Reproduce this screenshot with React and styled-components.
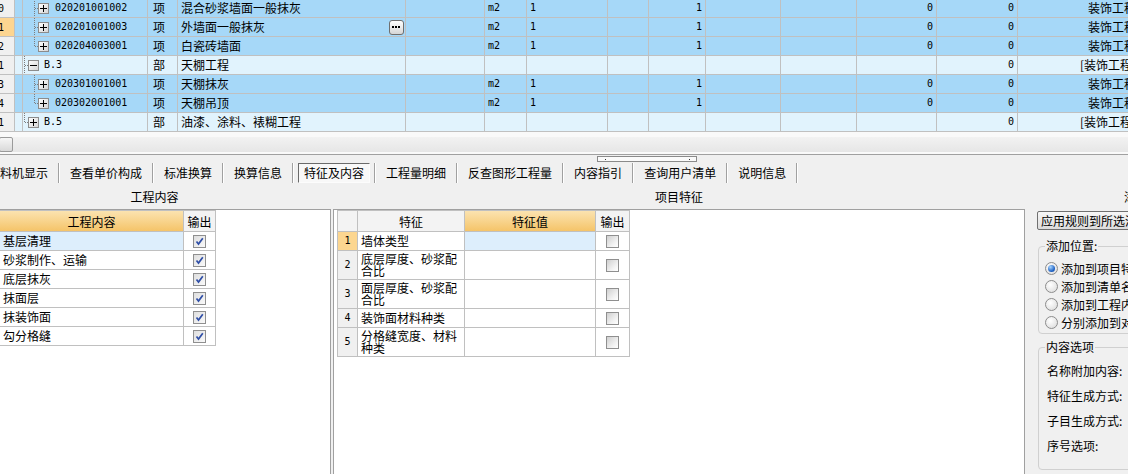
import React from "react";
import styled, { createGlobalStyle } from "styled-components";

const FONT = `"Noto Sans CJK SC", "Noto Sans", sans-serif`;
const MONO = `"DejaVu Sans Mono", "Liberation Mono", monospace`;

const GlobalStyle = createGlobalStyle`
  *, *::before, *::after { box-sizing: border-box; }
  html, body { margin: 0; padding: 0; }
  body { background: #f0f0f0; font-family: ${FONT}; font-size: 12px; color: #000; overflow: hidden; }
`;

const Page = styled.div`
  width: 1128px;
  height: 474px;
  overflow: hidden;
  display: flex;
  flex-direction: column;
  background: #f0f0f0;
`;

/* ---------- top grid ---------- */
const GRID_COLS = [15, 8, 125, 30, 228, 79, 42, 81, 41, 57, 75, 76, 80, 81, 122];

const Grid = styled.div`
  margin-top: -1px;
  flex: none;
  width: 1140px;
`;

const GridRow = styled.div`
  display: grid;
  grid-template-columns: ${GRID_COLS.map((w) => w + "px").join(" ")};
  height: 19px;
`;

const Cell = styled.div`
  display: flex;
  align-items: center;
  justify-content: ${(p) => (p.$right ? "flex-end" : "flex-start")};
  padding: 0 ${(p) => p.$pr ?? 3}px 0 ${(p) => p.$pl ?? 3}px;
  background: ${(p) => (p.$part ? "#e1f3fd" : "#a6d8f8")};
  border-right: 1px solid #c0c0c0;
  border-bottom: 1px solid #c0c0c0;
  white-space: nowrap;
  overflow: hidden;
  font-family: ${(p) => (p.$mono ? MONO : FONT)};
  font-size: ${(p) => (p.$mono ? "10px" : "12px")};
  line-height: 18px;
`;

const NoCell = styled.div`
  display: flex;
  align-items: center;
  justify-content: flex-end;
  padding-right: 10px;
  background: ${(p) => (p.$sel ? "#fdd590" : "#f0f0f0")};
  border-right: 1px solid #c0c0c0;
  border-bottom: 1px solid #c0c0c0;
  overflow: hidden;
  white-space: nowrap;
  font-family: ${MONO};
  font-size: 10px;
`;

const Code = styled.span`
  font-family: ${MONO};
  font-size: 10px;
`;

const EllipsisBtn = styled.span`
  margin-left: auto;
  flex: none;
  width: 15px;
  height: 15px;
  border: 1px solid #6f6f6f;
  border-radius: 3px;
  background: linear-gradient(#ffffff, #d6d6d6);
  display: flex;
  align-items: center;
  justify-content: center;
`;

const TreeGlyph = ({ level, last, open }) => {
  const w = level === 1 ? 21 : 32;
  const vx = level === 1 ? 1.5 : 11.5;
  const bx = level === 1 ? 5 : 15;
  return (
    <svg width={w} height={18} style={{ flex: "none", display: "block" }} shapeRendering="crispEdges">
      <defs>
        <linearGradient id="tg" x1="0" y1="0" x2="1" y2="1">
          <stop offset="0" stopColor="#ffffff" />
          <stop offset="1" stopColor="#d4d4d4" />
        </linearGradient>
      </defs>
      <line x1={vx} y1={0} x2={vx} y2={last ? 10 : 18} stroke="#7c7c7c" strokeDasharray="1 1" />
      <line x1={vx} y1={9.5} x2={bx} y2={9.5} stroke="#7c7c7c" strokeDasharray="1 1" />
      <rect x={bx + 0.5} y={4.5} width={10} height={10} fill="url(#tg)" stroke="#8c8c8c" />
      <line x1={bx + 2} y1={9.5} x2={bx + 9} y2={9.5} stroke="#000" />
      {!open && <line x1={bx + 5.5} y1={6} x2={bx + 5.5} y2={13} stroke="#000" />}
    </svg>
  );
};

const rows = [
  { no: "10", code: "020201001002", type: "项", name: "混合砂浆墙面一般抹灰" },
  { no: "11", sel: true, code: "020201001003", type: "项", name: "外墙面一般抹灰", ellipsis: true },
  { no: "12", code: "020204003001", type: "项", name: "白瓷砖墙面", last: true },
  { no: "1", part: true, code: "B.3", type: "部", name: "天棚工程", open: true },
  { no: "13", code: "020301001001", type: "项", name: "天棚抹灰" },
  { no: "14", code: "020302001001", type: "项", name: "天棚吊顶", last: true },
  { no: "1", part: true, code: "B.5", type: "部", name: "油漆、涂料、裱糊工程", last: true },
];

/* ---------- scrollbar ---------- */
const HScroll = styled.div`
  flex: none;
  height: 23px;
  padding-top: 5px;
  background: #f9f9f9;
  border-bottom: 1px solid #a0a0a0;
`;
const Track = styled.div`
  height: 16px;
  background: linear-gradient(#f2f2f2, #e6e6e6);
  border-bottom: 1px solid #fafafa;
`;
const Thumb = styled.div`
  width: 14px;
  height: 15px;
  margin-left: -1px;
  border: 1px solid #9a9a9a;
  border-radius: 2px;
  background: linear-gradient(#f6f6f6, #d9d9d9);
`;

/* ---------- tabs ---------- */
const TabArea = styled.div`
  position: relative;
  flex: none;
  height: 29px;
`;
const Splitter = styled.div`
  position: absolute;
  left: 597px;
  top: 1px;
  width: 100px;
  height: 6px;
  border: 1px solid #8a8a8a;
  background: #fafafa;
`;
const TabBar = styled.div`
  display: flex;
  align-items: center;
  height: 20px;
  margin: 8px 0 0 -22px;
`;
const Tab = styled.div`
  padding: 0 10px;
  line-height: 20px;
  white-space: nowrap;
  flex: none;
`;
const ActiveTab = styled.div`
  margin: 0 4px;
  padding: 0 5px;
  height: 20px;
  line-height: 18px;
  border: 1px solid;
  border-color: #6a6a6a #fcfcfc #fcfcfc #6a6a6a;
  background: #f8f8f8;
  white-space: nowrap;
  flex: none;
`;
const Sep = styled.div`
  flex: none;
  width: 2px;
  height: 20px;
  border-left: 1px solid #a0a0a0;
  border-right: 1px solid #ffffff;
`;

const tabs = ["工料机显示", "查看单价构成", "标准换算", "换算信息", "特征及内容", "工程量明细", "反查图形工程量", "内容指引", "查询用户清单", "说明信息"];

/* ---------- lower panels ---------- */
const Lower = styled.div`
  flex: 1;
  min-height: 0;
  display: flex;
  gap: 2px;
`;
const Column = styled.div`
  display: flex;
  flex-direction: column;
  flex: ${(p) => (p.$w ? "none" : "1")};
  width: ${(p) => (p.$w ? p.$w + "px" : "auto")};
  margin-left: ${(p) => p.$ml || 0}px;
  min-width: 0;
`;
const ColHeader = styled.div`
  flex: none;
  height: 25px;
  display: flex;
  align-items: center;
  justify-content: ${(p) => (p.$left ? "flex-start" : "center")};
  padding-left: ${(p) => p.$pl || 0}px;
  white-space: nowrap;
  overflow: hidden;
`;
const PanelBody = styled.div`
  flex: 1;
  background: #ffffff;
  border: 1px solid #a0a0a0;
  border-bottom: none;
`;
const SideBody = styled.div`
  flex: 1;
  padding: 2px 0 0 10px;
  display: flex;
  flex-direction: column;
  align-items: flex-start;
`;

const Table = styled.div`
  display: grid;
  grid-template-columns: ${(p) => p.$cols};
  width: max-content;
  margin-left: ${(p) => p.$ml}px;
  border-top: 1px solid #c0c0c0;
  border-left: ${(p) => (p.$bl ? "1px solid #c0c0c0" : "none")};
`;
const TH = styled.div`
  height: 21px;
  display: flex;
  align-items: center;
  justify-content: center;
  background: ${(p) => (p.$hot ? "linear-gradient(#fbe3b0, #f5c469)" : "#f3f3f3")};
  border-right: 1px solid #c0c0c0;
  border-bottom: 1px solid #c0c0c0;
  white-space: nowrap;
`;
const TD = styled.div`
  height: ${(p) => p.$h || 19}px;
  display: flex;
  align-items: center;
  justify-content: ${(p) => (p.$center ? "center" : "flex-start")};
  padding: 0 ${(p) => (p.$center ? 0 : 2)}px 0 ${(p) => (p.$center ? 0 : 3)}px;
  background: ${(p) => p.$bg || "#ffffff"};
  border-right: 1px solid #c0c0c0;
  border-bottom: 1px solid #c0c0c0;
  line-height: 12px;
  overflow: hidden;
`;
const RowNo = styled(TD)`
  font-family: ${MONO};
  font-size: 10px;
  background: ${(p) => (p.$sel ? "#fcd690" : "#f0f0f0")};
`;

const Box = styled.span`
  flex: none;
  width: 13px;
  height: 13px;
  border: 1px solid #8f8f8f;
  background: ${(p) =>
    p.$checked
      ? "linear-gradient(135deg, #dedede, #fafafa)"
      : "linear-gradient(135deg, #cfcfcf, #f2f2f2 65%, #ffffff)"};
  display: flex;
  align-items: center;
  justify-content: center;
`;

const Checkbox = ({ checked }) => (
  <Box $checked={checked}>
    {checked && (
      <svg width="11" height="11" viewBox="0 0 11 11">
        <path d="M2.5 5.5 L4.5 8 L8.8 2.2" fill="none" stroke="#2f4ea6" strokeWidth="1.7" />
      </svg>
    )}
  </Box>
);

const ActionButton = styled.div`
  height: 19px;
  padding: 0 3px;
  border: 1px solid #707070;
  border-radius: 2px;
  background: linear-gradient(#f7f7f7, #dcdcdc);
  line-height: 17px;
  white-space: nowrap;
`;

const Group = styled.fieldset`
  margin: ${(p) => p.$mt}px 0 0 1px;
  padding: ${(p) => p.$pt}px 0 ${(p) => p.$pb}px 6px;
  width: 130px;
  min-width: 0;
  border: 1px solid #d0d0d0;
  border-radius: 4px;
`;
const Legend = styled.legend`
  padding: 0 1px;
  line-height: 16px;
  white-space: nowrap;
`;
const RadioRow = styled.label`
  display: flex;
  align-items: center;
  gap: 3px;
  height: 18px;
  white-space: nowrap;
`;
const RadioCircle = styled.span`
  flex: none;
  width: 13px;
  height: 13px;
  border-radius: 50%;
  border: 1px solid #8c8c8c;
  background: radial-gradient(circle at 40% 35%, #ffffff, #d8d8d8);
  display: flex;
  align-items: center;
  justify-content: center;
`;
const RadioDot = styled.span`
  width: 7px;
  height: 7px;
  border-radius: 50%;
  background: radial-gradient(circle at 35% 30%, #a8d6ff, #1f62c4 65%, #0b3d8e);
`;
const OptRow = styled.div`
  height: 25px;
  display: flex;
  align-items: center;
  padding-left: 2px;
  white-space: nowrap;
`;

const leftItems = ["基层清理", "砂浆制作、运输", "底层抹灰", "抹面层", "抹装饰面", "勾分格缝"];
const features = [
  { name: "墙体类型", h: 19 },
  { name: "底层厚度、砂浆配合比", h: 29 },
  { name: "面层厚度、砂浆配合比", h: 29 },
  { name: "装饰面材料种类", h: 19 },
  { name: "分格缝宽度、材料种类", h: 29 },
];
const radios = ["添加到项目特征", "添加到清单名称", "添加到工程内容", "分别添加到对应列"];
const opts = ["名称附加内容:", "特征生成方式:", "子目生成方式:", "序号选项:"];

export default function App() {
  return (
    <Page>
      <GlobalStyle />
      <Grid>
        {rows.map((r, i) => {
          const part = !!r.part;
          return (
            <GridRow key={i}>
              <NoCell $sel={r.sel}>{r.no}</NoCell>
              <Cell $part={part} />
              <Cell $part={part} $pl={0}>
                <TreeGlyph level={part ? 1 : 2} last={r.last} open={r.open} />
                <Code>{r.code}</Code>
              </Cell>
              <Cell $part={part} $pl={5}>{r.type}</Cell>
              <Cell $part={part} $pr={1}>
                {r.name}
                {r.ellipsis && (
                  <EllipsisBtn>
                    <svg width="9" height="3" viewBox="0 0 9 3">
                      <rect x="0" y="0" width="2" height="2" fill="#000" />
                      <rect x="3" y="0" width="2" height="2" fill="#000" />
                      <rect x="6" y="0" width="2" height="2" fill="#000" />
                    </svg>
                  </EllipsisBtn>
                )}
              </Cell>
              <Cell $part={part} />
              <Cell $part={part} $mono>{part ? "" : "m2"}</Cell>
              <Cell $part={part} $mono>{part ? "" : "1"}</Cell>
              <Cell $part={part} />
              <Cell $part={part} $mono $right>{part ? "" : "1"}</Cell>
              <Cell $part={part} />
              <Cell $part={part} />
              <Cell $part={part} $mono $right>{part ? "" : "0"}</Cell>
              <Cell $part={part} $mono $right>0</Cell>
              <Cell $part={part} $right>{part ? "[装饰工程]" : "装饰工程"}</Cell>
            </GridRow>
          );
        })}
      </Grid>

      <HScroll>
        <Track>
          <Thumb />
        </Track>
      </HScroll>

      <TabArea>
        <Splitter>
          <svg width="98" height="4" style={{ display: "block" }}>
            <rect x="7" y="2" width="1" height="1" fill="#333" />
            <rect x="91" y="2" width="1" height="1" fill="#333" />
          </svg>
        </Splitter>
        <TabBar>
          {tabs.map((t) => (
            <React.Fragment key={t}>
              {t === "特征及内容" ? <ActiveTab>{t}</ActiveTab> : <Tab>{t}</Tab>}
              <Sep />
            </React.Fragment>
          ))}
        </TabBar>
      </TabArea>

      <Lower>
        <Column $w={353} $ml={-22}>
          <ColHeader>工程内容</ColHeader>
          <PanelBody>
            <Table $cols="184px 32px" $ml={21}>
              <TH $hot>工程内容</TH>
              <TH>输出</TH>
              {leftItems.map((t, i) => (
                <React.Fragment key={t}>
                  <TD $bg={i === 0 ? "#ddeefc" : "#ffffff"}>{t}</TD>
                  <TD $center>
                    <Checkbox checked />
                  </TD>
                </React.Fragment>
              ))}
            </Table>
          </PanelBody>
        </Column>

        <Column $w={692}>
          <ColHeader>项目特征</ColHeader>
          <PanelBody>
            <Table $cols="20px 107px 131px 34px" $ml={3} $bl>
              <TH />
              <TH>特征</TH>
              <TH $hot>特征值</TH>
              <TH>输出</TH>
              {features.map((f, i) => (
                <React.Fragment key={f.name}>
                  <RowNo $h={f.h} $center $sel={i === 0}>{i + 1}</RowNo>
                  <TD $h={f.h}>{f.name}</TD>
                  <TD $h={f.h} $bg={i === 0 ? "#ddeefc" : "#ffffff"} />
                  <TD $h={f.h} $center>
                    <Checkbox />
                  </TD>
                </React.Fragment>
              ))}
            </Table>
          </PanelBody>
        </Column>

        <Column>
          <ColHeader $left $pl={97}>添加规则设置</ColHeader>
          <SideBody>
            <ActionButton>应用规则到所选清单</ActionButton>
            <Group $mt={8} $pt={5} $pb={2}>
              <Legend>添加位置:</Legend>
              {radios.map((r, i) => (
                <RadioRow key={r}>
                  <RadioCircle>{i === 0 && <RadioDot />}</RadioCircle>
                  {r}
                </RadioRow>
              ))}
            </Group>
            <Group $mt={5} $pt={3} $pb={11}>
              <Legend>内容选项</Legend>
              {opts.map((o) => (
                <OptRow key={o}>{o}</OptRow>
              ))}
            </Group>
          </SideBody>
        </Column>
      </Lower>
    </Page>
  );
}
